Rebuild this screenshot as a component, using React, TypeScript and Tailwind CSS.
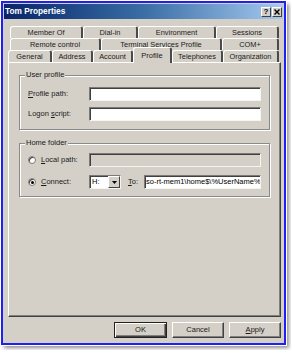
import React from "react";

type TabDef = { label: string; w: string; selected?: boolean };

const ROW1: TabDef[] = [
  { label: "Member Of", w: "w-[73px]" },
  { label: "Dial-in", w: "w-[55px]" },
  { label: "Environment", w: "w-[78px]" },
  { label: "Sessions", w: "w-[63px]" },
];

const ROW2: TabDef[] = [
  { label: "Remote control", w: "w-[91px]" },
  { label: "Terminal Services Profile", w: "w-[121px]" },
  { label: "COM+", w: "w-[57px]" },
];

const ROW3: TabDef[] = [
  { label: "General", w: "w-[44px]" },
  { label: "Address", w: "w-[41px]" },
  { label: "Account", w: "w-[40px]" },
  { label: "Profile", w: "w-[39px]", selected: true },
  { label: "Telephones", w: "w-[51px]" },
  { label: "Organization", w: "w-[56px]" },
];

function Tab({ tab }: { tab: TabDef }) {
  if (tab.selected) {
    return (
      <div
        className={`${tab.w} relative z-10 -mb-[1px] h-[16px] shrink-0 flex items-start justify-center pt-[3px] bg-[#d4d0c8] border-t border-l border-white border-r-2 border-r-[#4a4a4a] rounded-t-[3px] text-[7.5px] leading-[9px] text-[#1a1a1a]`}
      >
        {tab.label}
      </div>
    );
  }
  return (
    <div
      className={`${tab.w} h-[12px] shrink-0 flex items-center justify-center pt-[1px] bg-[#d4d0c8] border-t border-l border-white border-r-2 border-r-[#4a4a4a] rounded-t-[3px] text-[7.4px] leading-none text-[#1a1a1a]`}
    >
      {tab.label}
    </div>
  );
}

function Sunken({ className, children }: { className?: string; children?: React.ReactNode }) {
  return (
    <div
      className={`h-[14px] border border-t-[#7a7a7a] border-l-[#7a7a7a] border-r-[#f4f4f4] border-b-[#f4f4f4] shadow-[inset_1px_1px_0_#404040] ${className ?? ""}`}
    >
      {children}
    </div>
  );
}

function Radio({ checked }: { checked?: boolean }) {
  return (
    <span className="w-[8px] h-[8px] shrink-0 rounded-full bg-white border border-[#7a7a7a] shadow-[inset_1px_1px_0_#404040] flex items-center justify-center">
      {checked && <span className="w-[3px] h-[3px] rounded-full bg-black" />}
    </span>
  );
}

function Group({ title, className, children }: { title: string; className?: string; children: React.ReactNode }) {
  return (
    <div
      className={`relative border border-[#8a8a8a] shadow-[inset_1px_1px_0_#fff,1px_1px_0_#fff] ${className ?? ""}`}
    >
      <span className="absolute left-[5px] -top-[6px] bg-[#d4d0c8] px-[1px] text-[7.5px] leading-[10px] text-[#1a1a1a]">
        {title}
      </span>
      {children}
    </div>
  );
}

function Button({ children, isDefault }: { children: React.ReactNode; isDefault?: boolean }) {
  return (
    <div
      className={`h-[16px] flex items-center justify-center text-[7.5px] text-[#1a1a1a] border ${
        isDefault
          ? "w-[53px] border-[#222] shadow-[inset_1px_1px_0_#fff,inset_-1px_-1px_0_#404040,inset_-2px_-2px_0_#808080]"
          : "w-[52px] border-t-white border-l-white border-r-[#404040] border-b-[#404040] shadow-[inset_-1px_-1px_0_#808080]"
      }`}
    >
      {children}
    </div>
  );
}

export default function App() {
  return (
    <div className="w-[291px] h-[350px] bg-white pt-[1px] pl-[1px] font-['Liberation_Sans',Arial,sans-serif]">
      <div className="w-[285px] h-[344px] border-2 border-[#2020f4] bg-[#d4d0c8] shadow-[0_0_0_1px_#fff,3px_3px_4px_rgba(0,0,0,0.45)] flex flex-col">
        {/* title bar */}
        <div className="h-[15px] mx-[1px] mt-[1px] shrink-0 flex items-center pl-[1px] pr-[1px] bg-linear-to-r from-[#0a246a] via-[#3a6ea5] to-[#a6caf0]">
          <span className="text-[8.3px] font-bold text-white leading-none">Tom Properties</span>
          <div className="ml-auto flex gap-[1px] mt-[1px]">
            <div className="w-[10px] h-[10px] bg-[#d4d0c8] border border-t-white border-l-white border-r-[#404040] border-b-[#404040] flex items-center justify-center text-[8px] font-bold leading-none text-black">
              ?
            </div>
            <div className="w-[10px] h-[10px] bg-[#d4d0c8] border border-t-white border-l-white border-r-[#404040] border-b-[#404040] flex items-center justify-center">
              <svg width="6" height="6" viewBox="0 0 6 6">
                <path d="M0.5 0.5 L5.5 5.5 M5.5 0.5 L0.5 5.5" stroke="#000" strokeWidth="1.4" />
              </svg>
            </div>
          </div>
        </div>

        <div className="flex-1 flex flex-col pl-[5px] pr-[3px] pt-[7px]">
          {/* tabs */}
          <div className="flex ml-[2px]">
            {ROW1.map((t) => (
              <Tab key={t.label} tab={t} />
            ))}
          </div>
          <div className="flex ml-[2px]">
            {ROW2.map((t) => (
              <Tab key={t.label} tab={t} />
            ))}
          </div>
          <div className="flex items-end h-[12px]">
            {ROW3.map((t) => (
              <Tab key={t.label} tab={t} />
            ))}
          </div>

          {/* panel */}
          <div className="w-[273px] h-[255px] shrink-0 border border-t-white border-l-white border-r-[#404040] border-b-[#404040] shadow-[inset_-1px_-1px_0_#808080] pt-[12px] px-[10px]">
            <Group title="User profile" className="pt-[11px] pb-[8px] px-[8px] flex flex-col gap-[6px]">
              <div className="flex items-center h-[14px]">
                <span className="w-[61px] text-[7.5px] text-[#1a1a1a]">
                  <span className="underline">P</span>rofile path:
                </span>
                <Sunken className="flex-1 bg-white" />
              </div>
              <div className="flex items-center h-[14px]">
                <span className="w-[61px] text-[7.5px] text-[#1a1a1a]">
                  Logon <span className="underline">s</span>cript:
                </span>
                <Sunken className="flex-1 bg-white" />
              </div>
            </Group>

            <Group title="Home folder" className="mt-[13px] pt-[9px] pb-[7px] px-[8px] flex flex-col gap-[8px]">
              <div className="flex items-center h-[14px]">
                <div className="w-[61px] flex items-center gap-[5px] text-[7.5px] text-[#1a1a1a]">
                  <Radio />
                  <span>
                    <span className="underline">L</span>ocal path:
                  </span>
                </div>
                <Sunken className="flex-1 bg-[#d4d0c8]" />
              </div>
              <div className="flex items-center h-[14px] text-[7.5px] text-[#1a1a1a]">
                <div className="w-[61px] flex items-center gap-[5px]">
                  <Radio checked />
                  <span>
                    <span className="underline">C</span>onnect:
                  </span>
                </div>
                <Sunken className="w-[32px] bg-white flex items-stretch">
                  <span className="flex-1 pl-[2px] leading-[12px] text-black">H:</span>
                  <span className="w-[12px] bg-[#d4d0c8] border border-t-white border-l-white border-r-[#404040] border-b-[#404040] flex items-center justify-center">
                    <svg width="5" height="3" viewBox="0 0 5 3">
                      <path d="M0 0 H5 L2.5 3 Z" fill="#000" />
                    </svg>
                  </span>
                </Sunken>
                <span className="ml-[7px] w-[16px]">
                  <span className="underline">T</span>o:
                </span>
                <Sunken className="flex-1 bg-white overflow-hidden">
                  <span className="block pl-[1px] leading-[12px] whitespace-nowrap text-black">
                    so-rt-mem1\home$\%UserName%
                  </span>
                </Sunken>
              </div>
            </Group>
          </div>

          {/* buttons */}
          <div className="flex justify-end gap-[5px] mt-[5px]">
            <Button isDefault>OK</Button>
            <Button>Cancel</Button>
            <Button>
              <span>
                <span className="underline">A</span>pply
              </span>
            </Button>
          </div>
        </div>
      </div>
    </div>
  );
}
